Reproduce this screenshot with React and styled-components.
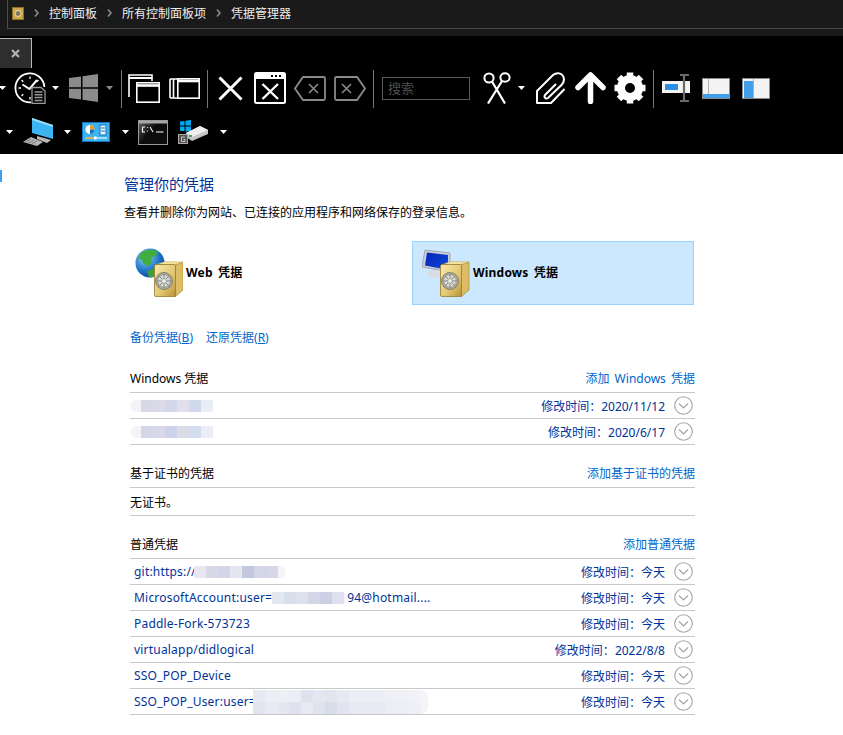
import React from "react";
import styled, {createGlobalStyle} from "styled-components";

const Global = createGlobalStyle`
  html, body {
    margin: 0;
    padding: 0;
    background: #ffffff;
  }
  body {
    font-family: "Noto Sans", "Noto Sans CJK SC", sans-serif;
    font-size: 12px;
    color: #000000;
    overflow: hidden;
  }
`
const Page = styled.div`
  width: 843px;
  height: 735px;
  overflow: hidden;
`
const AddressBar = styled.div`
  height: 36px;
  background-color: #1a1a1a;
`
const Breadcrumb = styled.div`
  display: flex;
  align-items: center;
  height: 26px;
  margin-left: 7px;
  padding: 0 0 2px 4px;
  border-left: 1px solid #4c4c4c;
  border-bottom: 1px solid #4c4c4c;
  color: #eeeeee;
  font-size: 12px;
`
const CrumbSep = styled.svg`
  margin: 0 10px;
`
const Ribbon = styled.div`
  height: 118px;
  overflow: hidden;
  background-color: #000000;
`
const Tab = styled.div`
  display: flex;
  align-items: center;
  justify-content: center;
  width: 31px;
  height: 29px;
  margin-top: 2px;
  background-color: #2e2e2e;
  border-top: 1px solid #b8b8b8;
  border-right: 1px solid #b8b8b8;
`
const ToolRow = styled.div`
  display: flex;
  align-items: center;
  height: 38px;
  margin-top: ${p => p.$mt || 0}px;
`
const Glyph = styled.svg`
  flex: none;
  margin-left: ${p => p.$ml || 0}px;
`
const Caret = styled.span`
  flex: none;
  width: 7px;
  height: 4px;
  margin-left: ${p => p.$ml || 0}px;
  background-color: ${p => p.$dim ? "#8a8a8a" : "#ffffff"};
  clip-path: polygon(0 0, 100% 0, 50% 100%);
`
const Divider = styled.span`
  flex: none;
  width: 1px;
  height: 38px;
  margin-top: 2px;
  margin-left: ${p => p.$ml || 0}px;
  background-color: #777777;
`
const SearchBox = styled.div`
  flex: none;
  box-sizing: border-box;
  width: 88px;
  height: 23px;
  margin-left: ${p => p.$ml || 0}px;
  padding-left: 5px;
  border: 1px solid #5a5a5a;
  color: #4e4e4e;
  font-size: 13px;
  line-height: 20px;
`
const Body = styled.div`
  display: flex;
`
const Sidebar = styled.div`
  flex: none;
  width: 124px;
`
const SideLink = styled.div`
  width: 2px;
  height: 12px;
  margin-top: 16px;
  background-color: #3aa0f0;
`
const Main = styled.div`
  width: 571px;
`
const Heading = styled.h1`
  margin: 20px 0 0;
  color: #003399;
  font-size: 15px;
  font-weight: 400;
  line-height: 20px;
`
const Intro = styled.p`
  margin: 10px 0 0;
  line-height: 18px;
  white-space: nowrap;
`
const Cards = styled.div`
  display: flex;
  justify-content: space-between;
  width: 570px;
  margin-top: 19px;
`
const Card = styled.div`
  box-sizing: border-box;
  display: flex;
  align-items: center;
  gap: 3px;
  width: 282px;
  height: 64px;
  padding-left: ${p => p.$active ? 9 : 10}px;
  background-color: ${p => p.$active ? "#cce8ff" : "transparent"};
  border: 1px solid ${p => p.$active ? "#99d1ff" : "transparent"};
`
const CardLabel = styled.span`
  padding-bottom: 2px;
  font-weight: 700;
  font-size: 12px;
  letter-spacing: 0.2px;
  word-spacing: 2px;
`
const BackupLinks = styled.div`
  display: flex;
  gap: 13px;
  margin: 24px 0 0 6px;
  line-height: 18px;
`
const Link = styled.a`
  color: #0066cc;
  text-decoration: none;
  word-spacing: 2px;
  u {
    text-decoration: underline;
  }
`
const Section = styled.section`
  margin: ${p => p.$mt || 19}px 0 0 6px;
`
const SectionHead = styled.div`
  box-sizing: border-box;
  display: flex;
  justify-content: space-between;
  height: 24px;
  padding-top: 1px;
  line-height: 18px;
  border-bottom: 1px solid #c8c8c8;
`
const Row = styled.div`
  box-sizing: border-box;
  display: flex;
  align-items: center;
  justify-content: space-between;
  height: ${p => p.$h || 26}px;
  padding-left: ${p => p.$plain ? 0 : 4}px;
  border-bottom: 1px solid #c8c8c8;
`
const Name = styled.div`
  display: flex;
  align-items: center;
  color: #003399;
  letter-spacing: 0.2px;
  white-space: nowrap;
`
const Modified = styled.div`
  display: flex;
  align-items: center;
  gap: 9px;
  padding-right: 2px;
  color: #003399;
`
const Mosaic = styled.span`
  display: inline-block;
  margin-left: ${p => p.$ml || 0}px;
  padding: ${p => p.$pad || "0"};
  background-color: #f3f3f8;
  border-radius: 8px;
`
const TileRow = styled.span`
  display: flex;
`
const Tile = styled.i`
  display: block;
  width: 12px;
  height: 12px;
  background-color: ${p => p.$c};
`

const SafeShape = ({x, y, id}) => (
    <g transform={`translate(${x} ${y})`}>
        <defs>
            <linearGradient id={id} x1="0" y1="0" x2="1" y2="1">
                <stop offset="0" stopColor="#f8eaae"/>
                <stop offset="0.6" stopColor="#e2c66e"/>
                <stop offset="1" stopColor="#b8923a"/>
            </linearGradient>
        </defs>
        <path d="M21 4 L29 1 V29 L21 36 Z" fill="#dcbd66" stroke="#9a7c2e" strokeWidth="0.6"/>
        <path d="M2 3.500 L21 3.500 L29 1 L11 0.500 Z" fill="#f4e3a0" stroke="#b4933f" strokeWidth="0.4"/>
        <rect x="0.500" y="3.500" width="21" height="32" rx="1.500" fill={`url(#${id})`} stroke="#9a7a2c" strokeWidth="0.800"/>
        <circle cx="10" cy="20" r="8.500" fill="#a8a89e" stroke="#77735f" strokeWidth="0.800"/>
        <circle cx="10" cy="20" r="5.800" fill="#dededa"/>
        <path d="M10 13 V27 M3 20 H17 M5 15 L15 25 M15 15 L5 25" stroke="#85847a" strokeWidth="1"/>
        <circle cx="10" cy="20" r="2.400" fill="#ecece8" stroke="#85847a" strokeWidth="0.600"/>
    </g>
)

const WebVault = () => (
    <Glyph width="48" height="50" viewBox="0 0 48 50">
        <defs>
            <radialGradient id="sea" cx="0.350" cy="0.300" r="0.800">
                <stop offset="0" stopColor="#8fd4f5"/>
                <stop offset="0.600" stopColor="#1c74c6"/>
                <stop offset="1" stopColor="#0b3d92"/>
            </radialGradient>
        </defs>
        <circle cx="15" cy="15" r="14.500" fill="url(#sea)"/>
        <path d="M6 5 C11 1 18 1 23 4 C22 8 18 8 16 11 C18 15 14 19 10 17 C7 15 8 10 3 11 Z" fill="#3fae3f"/>
        <path d="M12 24 C16 20 23 20 27 23 C25 27 19 30 14 29 Z" fill="#3c9f3a"/>
        <SafeShape x={19} y={13} id="safeWeb"/>
    </Glyph>
)

const WindowsVault = () => (
    <Glyph width="48" height="50" viewBox="0 0 48 50">
        <defs>
            <linearGradient id="screen" x1="0" y1="0" x2="1" y2="1">
                <stop offset="0" stopColor="#0a22b8"/>
                <stop offset="0.700" stopColor="#0b3ed0"/>
                <stop offset="1" stopColor="#6aa4ea"/>
            </linearGradient>
        </defs>
        <path d="M3 2 L28 5 V24 L0 19 Z" fill="#c9ced6" stroke="#8d939c" strokeWidth="0.700"/>
        <path d="M5 4.500 L26 7 V22 L3 17.500 Z" fill="url(#screen)"/>
        <ellipse cx="13" cy="26" rx="8" ry="4" fill="#d9dde2"/>
        <SafeShape x={18} y={13} id="safeWin"/>
    </Glyph>
)

const SmallVault = () => (
    <Glyph width="12" height="13" viewBox="0 0 12 13">
        <rect x="0.500" y="0.500" width="11" height="12" fill="#cfa84e" stroke="#8d6f25"/>
        <circle cx="6" cy="6.500" r="3" fill="#7f7a62" stroke="#f0dfa5"/>
    </Glyph>
)

const Chevron = () => (
    <CrumbSep width="5" height="8" viewBox="0 0 5 8">
        <path d="M1 0.500 L4 4 L1 7.500" fill="none" stroke="#8c8c8c" strokeWidth="1.600"/>
    </CrumbSep>
)

const TabClose = () => (
    <Glyph width="9" height="9" viewBox="0 0 9 9">
        <path d="M1 1 L8 8 M8 1 L1 8" stroke="#b4b4b4" strokeWidth="2.200"/>
    </Glyph>
)

const ClockDoc = ({ml}) => (
    <Glyph $ml={ml} width="32" height="32" viewBox="0 0 32 32">
        <path d="M17 30.400 A14.500 14.500 0 1 1 30.400 15" fill="none" stroke="#fff" strokeWidth="1.800"/>
        <path d="M16 4.500 V7 M16 25 V27.500 M4.500 16 H7 M7.500 8 L9.300 9.800 M24.500 8 L22.700 9.800 M7.500 24 L9.300 22.200" stroke="#fff" strokeWidth="1.300"/>
        <path d="M8.500 12.500 L15.500 17 L23 8" fill="none" stroke="#fff" strokeWidth="2"/>
        <path d="M18 15.500 H27 L31 19 V31.500 H18 Z" fill="#000" stroke="#9a9a9a" strokeWidth="1.300"/>
        <path d="M20.500 20 H28.500 M20.500 22.800 H28.500 M20.500 25.600 H28.500 M20.500 28.400 H28.500" stroke="#9a9a9a" strokeWidth="1.500"/>
    </Glyph>
)

const WinLogo = ({ml}) => (
    <Glyph $ml={ml} width="29" height="28" viewBox="0 0 29 28" fill="#8c8c8c">
        <path d="M0 4 L12 2.400 V13.200 H0 Z M13.500 2.200 L29 0 V13.200 H13.500 Z M0 14.800 H12 V25.600 L0 24 Z M13.500 14.800 H29 V28 L13.500 25.800 Z"/>
    </Glyph>
)

const WindowStack = ({ml}) => (
    <Glyph $ml={ml} width="32" height="29" viewBox="0 0 32 29">
        <path d="M1 23 V1 H24 V7" fill="none" stroke="#fff" strokeWidth="1.600"/>
        <path d="M1 4 H24" stroke="#fff" strokeWidth="2"/>
        <rect x="8.800" y="8.800" width="22.400" height="19.400" fill="#000" stroke="#fff" strokeWidth="1.600"/>
        <path d="M8.800 11.500 H31" stroke="#fff" strokeWidth="2.600"/>
    </Glyph>
)

const WindowSide = ({ml}) => (
    <Glyph $ml={ml} width="31" height="21" viewBox="0 0 31 21">
        <path d="M1 1 V20 M4.500 1 V20" stroke="#fff" strokeWidth="1.600"/>
        <path d="M1 1 H8 M1 20 H8" stroke="#fff" strokeWidth="1.400"/>
        <rect x="8.800" y="0.800" width="21.400" height="19.400" fill="#000" stroke="#fff" strokeWidth="1.600"/>
        <path d="M8.800 3 H30" stroke="#fff" strokeWidth="2.600"/>
    </Glyph>
)

const BigX = ({ml}) => (
    <Glyph $ml={ml} width="25" height="25" viewBox="0 0 25 25">
        <path d="M1.500 1.500 L23.500 23.500 M23.500 1.500 L1.500 23.500" stroke="#fff" strokeWidth="3"/>
    </Glyph>
)

const WindowX = ({ml}) => (
    <Glyph $ml={ml} width="32" height="32" viewBox="0 0 32 32">
        <rect x="1" y="1" width="30" height="30" rx="1.500" fill="#000" stroke="#fff" strokeWidth="2"/>
        <rect x="1" y="1" width="30" height="6" fill="#fff"/>
        <path d="M21 4 h2 M25 4 h2 M17 4 h2" stroke="#000" strokeWidth="2"/>
        <path d="M8.500 12 L24 27 M24 12 L8.500 27" stroke="#fff" strokeWidth="2.400"/>
    </Glyph>
)

const BackKey = ({ml, flip}) => (
    <Glyph $ml={ml} width="32" height="25" viewBox="0 0 32 25">
        <g transform={flip ? "translate(32 0) scale(-1 1)" : undefined} fill="none" stroke="#8a8a8a">
            <path d="M9 1 H29.500 Q31 1 31 2.500 V22.500 Q31 24 29.500 24 H9 L1 12.500 Z" strokeWidth="1.800"/>
            <path d="M15 8 L24 17 M24 8 L15 17" strokeWidth="1.600"/>
        </g>
    </Glyph>
)

const Scissors = ({ml}) => (
    <Glyph $ml={ml} width="28" height="32" viewBox="0 0 28 32">
        <g fill="none" stroke="#fff" strokeWidth="2">
            <ellipse cx="6" cy="6" rx="4.600" ry="4.600"/>
            <ellipse cx="22" cy="5.500" rx="4.600" ry="4.200"/>
            <path d="M9 9.500 L22 31.500 M19 9 L5 31.500" strokeWidth="2.200"/>
        </g>
    </Glyph>
)

const Paperclip = ({ml}) => (
    <Glyph $ml={ml} width="29" height="32" viewBox="0 0 29 32">
        <path d="M28.500 17 L15 31 H1 V19 L17 3 C21 0 26 1 27.500 5 C28.500 8 27.500 11 25.500 13 L12 26 C10 27.500 7.500 25.500 9 23 L20 12"
              fill="none" stroke="#fff" strokeWidth="2" strokeLinejoin="round"/>
    </Glyph>
)

const UpArrow = ({ml}) => (
    <Glyph $ml={ml} width="31" height="32" viewBox="0 0 31 32">
        <path d="M3 15.500 L15.500 3 L28 15.500 M15.500 4 V29.500" fill="none" stroke="#fff" strokeWidth="5.500" strokeLinecap="round" strokeLinejoin="round"/>
    </Glyph>
)

const Gear = ({ml}) => (
    <Glyph $ml={ml} width="32" height="32" viewBox="0 0 32 32">
        <circle cx="16" cy="16" r="9" fill="none" stroke="#fff" strokeWidth="8"/>
        <path d="M16 0.500 V6 M16 26 V31.500 M0.500 16 H6 M26 16 H31.500 M5 5 L9 9 M27 5 L23 9 M5 27 L9 23 M27 27 L23 23" stroke="#fff" strokeWidth="6.500"/>
    </Glyph>
)

const TextField = ({ml}) => (
    <Glyph $ml={ml} width="28" height="28" viewBox="0 0 28 28">
        <rect x="0" y="7" width="28" height="12" fill="#f4f4f4"/>
        <rect x="3" y="10" width="13" height="6" fill="#2b8fe6"/>
        <path d="M18 1 H27 M18 27 H27 M22 1 V27" stroke="#6a6a6a" strokeWidth="2.200" fill="none"/>
    </Glyph>
)

const PaneBottom = ({ml}) => (
    <Glyph $ml={ml} width="28" height="21" viewBox="0 0 28 21">
        <rect x="0.500" y="0.500" width="27" height="20" fill="#f4f4f4" stroke="#8a8a8a"/>
        <rect x="1" y="16" width="26" height="4" fill="#43a0e8"/>
        <path d="M6.500 1 V16" stroke="#b0b0b0"/>
    </Glyph>
)

const PaneLeft = ({ml}) => (
    <Glyph $ml={ml} width="28" height="21" viewBox="0 0 28 21">
        <rect x="0.500" y="0.500" width="27" height="20" fill="#f4f4f4" stroke="#8a8a8a"/>
        <rect x="2" y="3" width="9" height="17" fill="#43a0e8"/>
        <path d="M11.500 1 V20" stroke="#b0b0b0"/>
    </Glyph>
)

const Computer = ({ml}) => (
    <Glyph $ml={ml} width="30" height="28" viewBox="0 0 30 28">
        <path d="M9 0 L30 7 V21 L9 15 Z" fill="#3cb4f2"/>
        <path d="M9 0 L30 7 V9 L9 2 Z" fill="#9adcf8"/>
        <path d="M14 18 L28 22 L24 25 L14 21 Z" fill="#b8b8b8"/>
        <path d="M0 24 L8 19 L20 24 L14 28 Z" fill="#b4b4b4"/>
        <path d="M3 24 L8 21 M6 25 L11 22 M9 26 L14 23" stroke="#6c6c6c" strokeWidth="0.800"/>
    </Glyph>
)

const ControlPanel = ({ml}) => (
    <Glyph $ml={ml} width="28" height="20" viewBox="0 0 28 20">
        <rect x="0.500" y="0.500" width="27" height="19" fill="#3cb3ee" stroke="#0f78c2"/>
        <circle cx="8" cy="7.500" r="4.500" fill="#fff"/>
        <path d="M8 7.500 V3 A4.500 4.500 0 0 1 12.500 7.500 Z" fill="#f39a1e"/>
        <path d="M8 7.500 H12.500 A4.500 4.500 0 0 1 8 12 Z" fill="#1572bd"/>
        <rect x="18" y="3" width="6" height="10" fill="#e8f6fd" stroke="#1572bd"/>
        <path d="M19 6 H23 M19 9 H23" stroke="#1572bd"/>
        <path d="M3 16 H25" stroke="#e8f6fd" strokeWidth="1.200"/>
        <rect x="12" y="14.500" width="2.500" height="3" fill="#fff"/>
        <path d="M3 16 H12" stroke="#f39a1e" strokeWidth="1.200"/>
    </Glyph>
)

const Console = ({ml}) => (
    <Glyph $ml={ml} width="30" height="25" viewBox="0 0 30 25">
        <defs>
            <linearGradient id="cmd" x1="0" y1="0" x2="1" y2="0.700">
                <stop offset="0" stopColor="#6a6a6a"/>
                <stop offset="0.500" stopColor="#0c0c0c"/>
            </linearGradient>
        </defs>
        <rect x="0.500" y="0.500" width="29" height="24" fill="url(#cmd)" stroke="#9a9a9a"/>
        <rect x="1" y="1" width="28" height="2.500" fill="#a8a8a8"/>
        <path d="M4.500 7 H7 M4.500 7 V12 H7 M9 7.500 H9.800 M9 11 H9.800 M12 7 L15 12 M18 12 H25.500" fill="none" stroke="#fff" strokeWidth="1.100"/>
    </Glyph>
)

const DriveWin = ({ml}) => (
    <Glyph $ml={ml} width="30" height="24" viewBox="0 0 30 24">
        <path d="M2 1.500 L6.500 1 V5.500 H2 Z M7.500 0.800 L13 0 V5.500 H7.500 Z M2 6.500 H6.500 V11 H2 Z M7.500 6.500 H13 V11.500 H7.500 Z" fill="#00a8f0"/>
        <path d="M8 13 L22 6 L30 10 V14 L14 21 L8 17 Z" fill="#c4c4c4"/>
        <path d="M8 13 L22 6 L30 10 L14 17 Z" fill="#eeeeee"/>
        <rect x="11" y="15" width="3" height="2" fill="#3fae3f"/>
        <rect x="0.500" y="14.500" width="9" height="9" fill="#555" stroke="#a8a8a8"/>
        <path d="M7 17 H3.500 V21.500 H7 V19.500 H5.500" fill="none" stroke="#cfcfcf" strokeWidth="0.900"/>
    </Glyph>
)

const RoundChevron = () => (
    <Glyph width="19" height="19" viewBox="0 0 19 19">
        <circle cx="9.500" cy="9.500" r="8.800" fill="#fff" stroke="#a4a4a4" strokeWidth="1.100"/>
        <path d="M5 7.500 L9.500 12 L14 7.500" fill="none" stroke="#a4a4a4" strokeWidth="1.200"/>
    </Glyph>
)

const Blur = ({rows, ml, pad}) => (
    <Mosaic $ml={ml} $pad={pad}>
        {rows.map((row, i) => (
            <TileRow key={i}>
                {row.map((c, j) => <Tile key={j} $c={c}/>)}
            </TileRow>
        ))}
    </Mosaic>
)

const Credential = ({name, date}) => (
    <Row>
        <Name>{name}</Name>
        <Modified>
            <span>修改时间：{date}</span>
            <RoundChevron/>
        </Modified>
    </Row>
)

const App = () => {
    return (
        <Page>
            <Global/>
            <AddressBar>
                <Breadcrumb>
                    <SmallVault/>
                    <Chevron/>
                    控制面板
                    <Chevron/>
                    所有控制面板项
                    <Chevron/>
                    凭据管理器
                </Breadcrumb>
            </AddressBar>
            <Ribbon>
                <Tab><TabClose/></Tab>
                <ToolRow $mt={1}>
                    <Caret $ml={-1}/>
                    <ClockDoc ml={8}/>
                    <Caret $ml={6}/>
                    <WinLogo ml={10}/>
                    <Caret $ml={8} $dim/>
                    <Divider $ml={8}/>
                    <WindowStack ml={6}/>
                    <WindowSide ml={9}/>
                    <Divider $ml={7}/>
                    <BigX ml={10}/>
                    <WindowX ml={11}/>
                    <BackKey ml={8}/>
                    <BackKey ml={8} flip/>
                    <Divider $ml={7}/>
                    <SearchBox $ml={8}>搜索</SearchBox>
                    <Scissors ml={13}/>
                    <Caret $ml={7}/>
                    <Paperclip ml={11}/>
                    <UpArrow ml={10}/>
                    <Gear ml={8}/>
                    <Divider $ml={7}/>
                    <TextField ml={8}/>
                    <PaneBottom ml={12}/>
                    <PaneLeft ml={12}/>
                </ToolRow>
                <ToolRow $mt={6}>
                    <Caret $ml={6}/>
                    <Computer ml={10}/>
                    <Caret $ml={11}/>
                    <ControlPanel ml={11}/>
                    <Caret $ml={12}/>
                    <Console ml={9}/>
                    <DriveWin ml={10}/>
                    <Caret $ml={12}/>
                </ToolRow>
            </Ribbon>
            <Body>
                <Sidebar><SideLink/></Sidebar>
                <Main>
                    <Heading>管理你的凭据</Heading>
                    <Intro>查看并删除你为网站、已连接的应用程序和网络保存的登录信息。</Intro>
                    <Cards>
                        <Card>
                            <WebVault/>
                            <CardLabel>Web 凭据</CardLabel>
                        </Card>
                        <Card $active>
                            <WindowsVault/>
                            <CardLabel>Windows 凭据</CardLabel>
                        </Card>
                    </Cards>
                    <BackupLinks>
                        <Link>备份凭据(<u>B</u>)</Link>
                        <Link>还原凭据(<u>R</u>)</Link>
                    </BackupLinks>
                    <Section $mt={22}>
                        <SectionHead>
                            <span>Windows 凭据</span>
                            <Link>添加 Windows 凭据</Link>
                        </SectionHead>
                        <Credential
                            name={<Blur ml={-4} pad="0 0 0 11px" rows={[["#d8d9e8", "#dcdae8", "#d2d8ea", "#e0dfea", "#d0d8ec", "#e9edf6"]]}/>}
                            date="2020/11/12"/>
                        <Credential
                            name={<Blur ml={-3} pad="0 0 0 10px" rows={[["#d4d6e8", "#dad8e8", "#cdd4ea", "#dedbe9", "#d6dcef", "#eceef6"]]}/>}
                            date="2020/6/17"/>
                    </Section>
                    <Section>
                        <SectionHead>
                            <span>基于证书的凭据</span>
                            <Link>添加基于证书的凭据</Link>
                        </SectionHead>
                        <Row $h={28} $plain>无证书。</Row>
                    </Section>
                    <Section>
                        <SectionHead>
                            <span>普通凭据</span>
                            <Link>添加普通凭据</Link>
                        </SectionHead>
                        <Credential
                            name={<>git:https://<Blur ml={-2} pad="0 8px 0 0" rows={[["#e9e7f0", "#d8d8e6", "#d2d6e8", "#e6e6ef", "#c4c8de", "#d2d6e8", "#d6d8e8"]]}/></>}
                            date="今天"/>
                        <Credential
                            name={<>MicrosoftAccount:user=<Blur pad="0 3px 0 0" rows={[["#e4e6f0", "#d8dfec", "#dde1ec", "#d4d6e8", "#ccd0e4", "#dde0ee"]]}/>94@hotmail....</>}
                            date="今天"/>
                        <Credential name="Paddle-Fork-573723" date="今天"/>
                        <Credential name="virtualapp/didlogical" date="2022/8/8"/>
                        <Credential name="SSO_POP_Device" date="今天"/>
                        <Credential
                            name={<>SSO_POP_User:user=<Blur ml={-3} pad="0 7px 0 0" rows={[
                                ["#e6e8f2", "#eceef5", "#eeeff5", "#eceef5", "#dfe2ee", "#e4e6f0", "#e2e5f0", "#e6e8f2", "#eceef5", "#eceef5", "#eceef5", "#eef0f6", "#f0f1f7", "#f2f3f8"],
                                ["#e2e4f0", "#e8eaf3", "#e4e6f0", "#dfe2ee", "#e6e8f2", "#dfe3ee", "#d6dcea", "#e2e5f0", "#e6e8f2", "#e8eaf3", "#e8eaf3", "#eceef5", "#eceef5", "#eef0f6"]
                            ]}/></>}
                            date="今天"/>
                    </Section>
                </Main>
            </Body>
        </Page>
    )
}
export default App;
